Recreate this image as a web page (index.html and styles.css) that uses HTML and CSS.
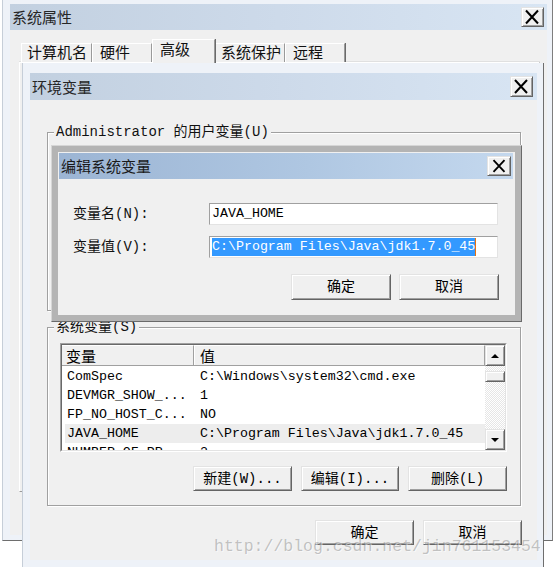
FILE: index.html
```html
<!DOCTYPE html>
<html lang="zh-CN">
<head>
<meta charset="utf-8">
<title>环境变量</title>
<link rel="stylesheet" href="styles.css">
</head>
<body>
<div class="desk">
  <section class="win win-sys">
    <header class="titlebar tb-sys">
      <span class="title">系统属性</span>
      <span class="close raised"><svg viewBox="0 0 21 18" width="21" height="18"><path d="M4 2.5 L16 15.5 M16 2.5 L4 15.5"/></svg></span>
    </header>
    <div class="win-body sys-body">
      <nav class="tabs">
        <span class="tab tab-a">计算机名</span>
        <span class="tab tab-b">硬件</span>
        <span class="tab tab-sel">高级</span>
        <span class="tab tab-c">系统保护</span>
        <span class="tab tab-d">远程</span>
      </nav>
      <div class="tabpanel"></div>
    </div>
  </section>

  <section class="win win-env">
    <header class="titlebar tb-env">
      <span class="title">环境变量</span>
      <span class="close raised"><svg viewBox="0 0 21 19" width="21" height="19"><path d="M4 3 L16 16 M16 3 L4 16"/></svg></span>
    </header>
    <div class="win-body env-body">
      <div class="group group-user">
        <div class="group-label">Administrator 的用户变量(U)</div>
      </div>
      <div class="group group-sys">
        <div class="group-label">系统变量(S)</div>
        <div class="listview">
          <div class="lv-inner">
            <div class="lv-main">
              <div class="lv-head"><span class="hc hc1">变量</span><span class="hc hc2">值</span></div>
              <div class="lv-rows">
                <div class="row"><span class="c1">ComSpec</span><span class="c2">C:\Windows\system32\cmd.exe</span></div>
                <div class="row"><span class="c1">DEVMGR_SHOW_...</span><span class="c2">1</span></div>
                <div class="row"><span class="c1">FP_NO_HOST_C...</span><span class="c2">NO</span></div>
                <div class="row row-sel"><span class="c1">JAVA_HOME</span><span class="c2">C:\Program Files\Java\jdk1.7.0_45</span></div>
                <div class="row"><span class="c1">NUMBER_OF_PR...</span><span class="c2">2</span></div>
              </div>
            </div>
            <div class="scrollbar">
              <span class="sb-btn raised"><span class="arrow-up"></span></span>
              <span class="sb-track"><span class="sb-thumb raised"></span></span>
              <span class="sb-btn raised"><span class="arrow-down"></span></span>
            </div>
          </div>
        </div>
        <div class="btn-row">
          <span class="btn raised w99">新建(W)...</span>
          <span class="btn raised w98">编辑(I)...</span>
          <span class="btn raised w99">删除(L)</span>
        </div>
      </div>
      <div class="actions">
        <span class="btn raised w99">确定</span>
        <span class="btn raised w99">取消</span>
      </div>
    </div>
  </section>

  <section class="dlg">
    <div class="dlg-inner">
      <header class="titlebar tb-dlg">
        <span class="title">编辑系统变量</span>
        <span class="close raised"><svg viewBox="0 0 24 20" width="24" height="20"><path d="M6 3.5 L18 16.5 M18 3.5 L6 16.5"/></svg></span>
      </header>
      <div class="dlg-body">
        <div class="form">
          <span class="flabel">变量名(N):</span>
          <span class="field">JAVA_HOME</span>
          <span class="flabel">变量值(V):</span>
          <span class="field"><span class="sel">C:\Program Files\Java\jdk1.7.0_45</span><span class="caret"></span></span>
        </div>
        <div class="dlg-btns">
          <span class="btn raised w100 h26">确定</span>
          <span class="btn raised w100 h26">取消</span>
        </div>
      </div>
    </div>
  </section>

  <div class="watermark">http://blog.csdn.net/jin761153454</div>
</div>
</body>
</html>
```

FILE: styles.css
```css
* { box-sizing: border-box; }
html, body { margin: 0; padding: 0; }
body {
  width: 555px;
  height: 567px;
  overflow: hidden;
  background: #ffffff;
  font-family: "Liberation Mono", "Noto Sans CJK SC", monospace;
  font-size: 14px;
  color: #000;
}
.desk { position: relative; width: 555px; height: 567px; overflow: hidden; }

/* windows */
.win {
  position: absolute;
  display: flex;
  flex-direction: column;
  background: #eef2f8;
}
.win-sys {
  left: 2px; top: 0;
  width: 551px; height: 541px;
  border-left: 1px solid #c6ced8;
  border-right: 1px solid #7e7e7e;
  border-bottom: 1px solid #6e6e6e;
  padding: 4px 5px 5px 7px;
}
.win-env {
  left: 22px; top: 63px;
  width: 522px; height: 504px;
  border-left: 1px solid #c6ced8;
  border-right: 1px solid #6e6e6e;
  padding: 10px 6px 7px 7px;
}
.win-body { background: #f0f0f0; flex: 1; }

.titlebar {
  display: flex;
  align-items: center;
  justify-content: space-between;
  background: linear-gradient(90deg, #c2d0e0 0%, #cddaea 50%, #d8e5f3 100%);
}
.title {
  font-family: "Noto Sans CJK SC", sans-serif;
  font-size: 15px;
  line-height: 20px;
  color: #262626;
  padding-left: 2px;
}
.tb-sys { height: 26px; padding-right: 3px; }
.tb-sys .close { width: 23px; height: 20px; }
.tb-env { height: 27px; padding-right: 4px; }
.tb-env .close { width: 23px; height: 21px; }
.tb-dlg {
  height: 26px;
  margin: 1px 2px 0 1px;
  padding-right: 2px;
  background: linear-gradient(90deg, #9cb5d4 0%, #afc7e2 55%, #c4d8ee 100%);
}
.tb-dlg .title { color: #1a1a1a; }
.tb-dlg .close { width: 24px; height: 20px; }

.close {
  display: flex;
  align-items: center;
  justify-content: center;
}
.close svg { display: block; }
.close path { stroke: #000; stroke-width: 2; fill: none; }

.raised {
  background: #f0f0f0;
  border: 1px solid;
  border-color: #e3e3e3 #646464 #646464 #e3e3e3;
  box-shadow: inset 1px 1px 0 #ffffff, inset -1px -1px 0 #a0a0a0;
}

/* system properties body */
.sys-body { padding: 10px 0 0 9px; }
.tabs {
  display: flex;
  align-items: flex-end;
  height: 22px;
  margin-left: 2px;
  position: relative;
}
.tab {
  height: 19px;
  font-family: "Noto Sans CJK SC", sans-serif;
  font-size: 15px;
  line-height: 16px;
  color: #111;
  background: #f0f0f0;
  border-top: 1px solid #fff;
  border-left: 1px solid #fff;
  border-right: 1px solid #9a9a9a;
  box-shadow: 1px 0 0 #6a6a6a;
}
.tab-a { width: 71px; padding-left: 5px; }
.tab-b { width: 60px; padding-left: 7px; }
.tab-sel {
  width: 63px; height: 24px;
  margin-bottom: -1px;
  padding-left: 7px;
  line-height: 17px;
  position: relative;
  z-index: 1;
}
.tab-c { width: 70px; padding-left: 5px; }
.tab-d { width: 60px; padding-left: 7px; }
.tabpanel {
  width: 521px;
  height: 430px;
  border-top: 1px solid #fff;
  border-left: 1px solid #fff;
  border-right: 1px solid #9a9a9a;
  border-bottom: 1px solid #9a9a9a;
  box-shadow: 0 -1px 0 #e0e0e0;
}

/* environment variables body */
.env-body { display: flex; flex-direction: column; padding-top: 32px; }
.group {
  margin-left: 17px;
  width: 474px;
  height: 179px;
  border: 1px solid #a0a0a0;
  box-shadow: inset 1px 1px 0 #fff, 1px 1px 0 #fff;
}
.group-sys { margin-top: 16px; }
.group-label {
  width: fit-content;
  margin: -10px 0 0 6px;
  padding: 0 2px;
  line-height: 18px;
  height: 18px;
  background: #f0f0f0;
  color: #111;
  white-space: nowrap;
}

.listview {
  margin: 7px 0 0 12px;
  width: 447px;
  height: 109px;
  border: 1px solid;
  border-color: #a0a0a0 #ffffff #ffffff #a0a0a0;
}
.lv-inner {
  height: 100%;
  display: flex;
  background: #fff;
  border: 1px solid;
  border-color: #696969 #e3e3e3 #e3e3e3 #696969;
}
.lv-main { flex: 1; overflow: hidden; }
.lv-head {
  display: flex;
  height: 21px;
  background: #f0f0f0;
}
.hc {
  font-family: "Noto Sans CJK SC", sans-serif;
  font-size: 15px;
  line-height: 19px;
  border-top: 1px solid #fff;
  border-bottom: 1px solid #a0a0a0;
}
.hc1 { width: 132px; padding-left: 4px; border-right: 1px solid #a0a0a0; box-shadow: 1px 0 0 #fff; }
.hc2 { flex: 1; padding-left: 6px; border-right: 1px solid #a0a0a0; }
.lv-rows { padding-top: 1px; }
.row {
  display: flex;
  height: 19px;
  margin-left: 3px;
  font-size: 13.3px;
  line-height: 19px;
  white-space: nowrap;
}
.row-sel { background: #ededed; }
.c1 { width: 129px; padding-left: 2px; }
.c2 { padding-left: 6px; }

.scrollbar {
  width: 20px;
  display: flex;
  flex-direction: column;
}
.sb-btn {
  height: 21px;
  display: flex;
  align-items: center;
  justify-content: center;
}
.sb-track {
  flex: 1;
  background: repeating-conic-gradient(#ffffff 0 25%, #e6e6e6 0 50%) 0 0 / 2px 2px;
  padding-top: 5px;
}
.sb-thumb { display: block; height: 11px; }
.arrow-up {
  width: 0; height: 0;
  border-left: 4px solid transparent;
  border-right: 4px solid transparent;
  border-bottom: 4px solid #000;
}
.arrow-down {
  width: 0; height: 0;
  border-left: 4px solid transparent;
  border-right: 4px solid transparent;
  border-top: 4px solid #000;
}

.btn-row {
  display: flex;
  justify-content: flex-end;
  gap: 9px;
  margin: 14px 13px 0 0;
}
.btn {
  display: flex;
  align-items: center;
  justify-content: center;
  height: 25px;
  font-size: 14px;
  line-height: 18px;
  color: #000;
  white-space: nowrap;
}
.w98 { width: 98px; }
.w99 { width: 99px; }
.w100 { width: 100px; }
.h26 { height: 26px; }
.actions {
  display: flex;
  justify-content: flex-end;
  gap: 9px;
  margin-top: 14px;
  padding-right: 15px;
}

/* edit dialog */
.dlg {
  position: absolute;
  left: 51px; top: 145px;
  width: 471px; height: 177px;
  background: #b4b4b4;
  border: 1px solid;
  border-color: #d6d6d6 #6a6a6a #6a6a6a #d6d6d6;
  padding: 6px;
  z-index: 5;
}
.dlg-inner {
  height: 100%;
  background: #f0f0f0;
  display: flex;
  flex-direction: column;
}
.dlg-body { padding: 24px 16px 0 15px; }
.form {
  display: grid;
  grid-template-columns: 136px 289px;
  grid-auto-rows: 22px;
  row-gap: 11px;
  align-items: center;
}
.flabel { font-size: 14px; line-height: 18px; color: #111; }
.field {
  height: 22px;
  display: flex;
  align-items: center;
  padding-left: 2px;
  background: #fff;
  border: 1px solid;
  border-color: #a0a0a0 #e3e3e3 #e3e3e3 #a0a0a0;
  font-size: 13.3px;
  line-height: 18px;
  white-space: nowrap;
}
.sel { background: #3399ff; color: #fff; }
.caret { width: 1px; height: 18px; background: #e8720c; }
.dlg-btns {
  display: flex;
  justify-content: flex-end;
  gap: 8px;
  margin-top: 16px;
}

.watermark {
  position: absolute;
  left: 214px; top: 537px;
  font-size: 16.5px;
  line-height: 20px;
  color: rgba(110, 110, 110, 0.38);
  text-shadow: 1px 1px 0 rgba(255, 255, 255, 0.5);
  white-space: nowrap;
  z-index: 10;
}
```
